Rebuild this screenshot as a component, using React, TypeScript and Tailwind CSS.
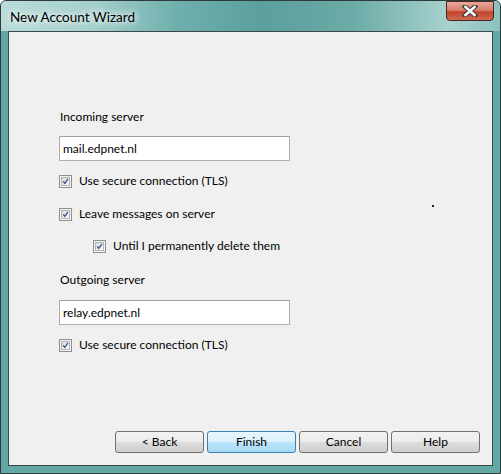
import React from "react";

function CheckBox() {
  return (
    <span className="w-[13px] h-[13px] shrink-0 border border-[#8e8f8f] bg-[#f4f4f4] p-[1px] flex">
      <span className="flex-1 border border-[#b2b2b2] bg-gradient-to-br from-[#dcdcdc] to-[#fbfbfb] relative">
        <svg viewBox="0 0 9 9" className="absolute inset-0 w-full h-full">
          <path d="M1.5 4.3 L3.6 6.8 L7.6 1.2" fill="none" stroke="#3f5494" strokeWidth="1.8" />
        </svg>
      </span>
    </span>
  );
}

function Check({ label, indent }: { label: string; indent?: boolean }) {
  return (
    <label className={`flex items-center gap-[7px] h-4 ${indent ? "ml-[34px]" : ""}`}>
      <CheckBox />
      <span>{label}</span>
    </label>
  );
}

function TextField({ value }: { value: string }) {
  return (
    <div className="w-[231px] h-[25px] border border-[#abadb3] border-t-[#9fa2a9] bg-white pl-[3px] flex items-center">
      {value}
    </div>
  );
}

function WizButton({ children, primary }: { children: React.ReactNode; primary?: boolean }) {
  return (
    <button
      className={`w-[89px] h-[22px] rounded-[3px] border text-black leading-none ${
        primary
          ? "border-[#3c7fb1] bg-[linear-gradient(#eaf6fd_0%,#d9f0fc_50%,#bee6fd_50%,#a7d9f5_100%)]"
          : "border-[#707070] bg-[linear-gradient(#f2f2f2_0%,#ebebeb_50%,#dddddd_50%,#cfcfcf_100%)]"
      }`}
    >
      {children}
    </button>
  );
}

export default function App() {
  return (
    <div
      className="w-[501px] h-[474px] relative rounded-t-[6px] border border-[#2d3b3b] bg-[#62a8a5] flex flex-col text-[12px] text-black"
      style={{ fontFamily: 'Lato, "Noto Sans", sans-serif' }}
    >
      {/* title bar */}
      <div className="h-[30px] shrink-0 rounded-t-[5px] bg-[linear-gradient(90deg,#b9dcd9_0%,#a6d0cd_18%,#6fb0ad_35%,#5c9f9c_52%,#6aaaa7_70%,#a9d2cf_90%,#89c2bf_100%)] flex items-start pl-[9px] pr-[6px]">
        <span className="mt-[6px] text-[13.5px] [text-shadow:0_0_6px_#ffffff,0_0_10px_#ffffff]">New Account Wizard</span>
        <button className="ml-auto w-[48px] h-[20px] rounded-b-[4px] border border-[#4b2620] bg-[linear-gradient(#e9a89a_0%,#d8806d_45%,#c2432b_55%,#cf6a4f_100%)] flex items-center justify-center">
          <svg width="16" height="12" viewBox="0 0 16 12">
            <path d="M3 1.5 L13 10.5 M13 1.5 L3 10.5" stroke="#3c3c3c" strokeWidth="4.6" strokeLinecap="square" />
            <path d="M3.5 2 L12.5 10 M12.5 2 L3.5 10" stroke="#ffffff" strokeWidth="2.6" strokeLinecap="square" />
          </svg>
        </button>
      </div>

      {/* client area */}
      <div className="flex-1 mx-[7px] mb-[7px] border border-[#3a4848] bg-[#f0f0f0] flex flex-col pl-[50px] pr-[12px] pt-[77px] pb-[12px] relative">
        <div className="h-4 flex items-center pl-[1px]">Incoming server</div>
        <div className="mt-[11px]">
          <TextField value="mail.edpnet.nl" />
        </div>
        <div className="mt-[12px]">
          <Check label="Use secure connection (TLS)" />
        </div>
        <div className="mt-[17px]">
          <Check label="Leave messages on server" />
        </div>
        <div className="mt-[16px]">
          <Check label="Until I permanently delete them" indent />
        </div>
        <div className="mt-[18px] h-4 flex items-center pl-[1px]">Outgoing server</div>
        <div className="mt-[12px]">
          <TextField value="relay.edpnet.nl" />
        </div>
        <div className="mt-[12px]">
          <Check label="Use secure connection (TLS)" />
        </div>

        <div className="mt-auto flex justify-end gap-[3px]">
          <WizButton>&lt; Back</WizButton>
          <WizButton primary>Finish</WizButton>
          <WizButton>Cancel</WizButton>
          <WizButton>Help</WizButton>
        </div>

        <span className="absolute left-[423px] top-[173px] w-[2px] h-[2px] bg-[#222]" />
      </div>
    </div>
  );
}
